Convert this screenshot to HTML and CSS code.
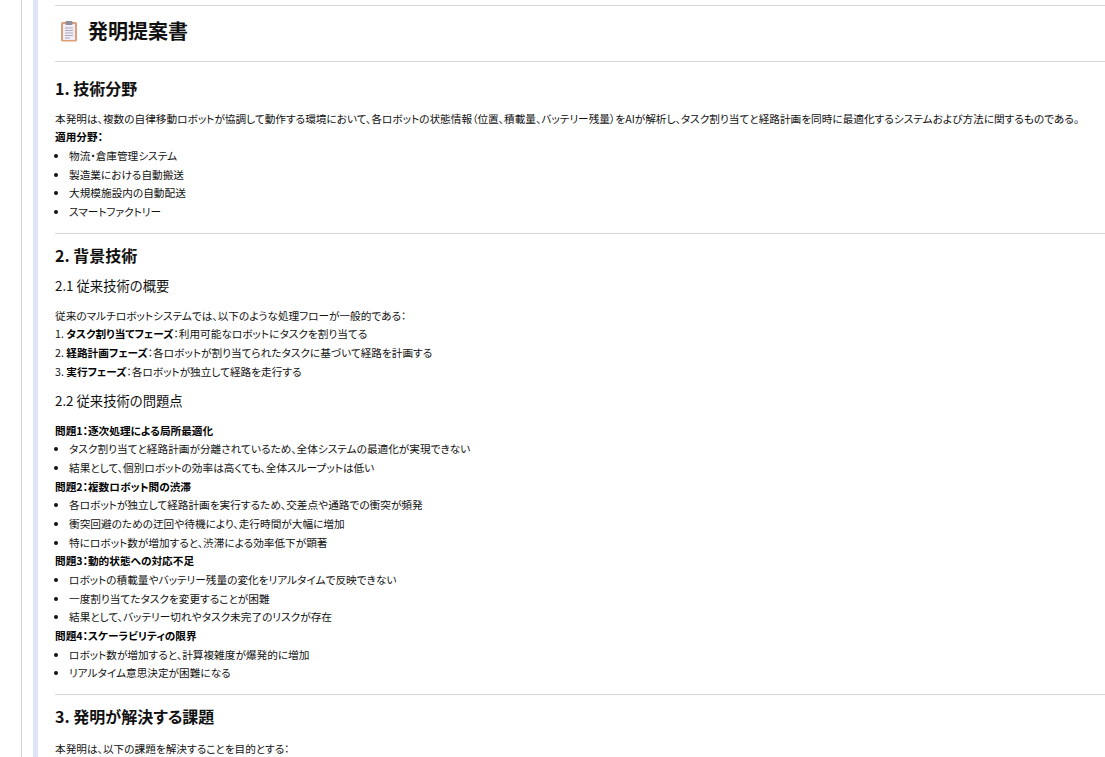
FILE: index.html
```html
<!DOCTYPE html>
<html lang="ja">
<head>
<meta charset="utf-8">
<title>発明提案書</title>
<link rel="stylesheet" href="styles.css">
</head>
<body>
<div class="rail">
<main class="doc">
<hr class="rule first">
<h1 class="title"><svg class="clip" viewBox="0 0 18 22" width="18" height="22" aria-hidden="true"><rect x="1" y="2" width="16" height="19.5" rx="1.5" fill="#dc9f78"/><rect x="3" y="4" width="12" height="16" fill="#f0edf6"/><rect x="5.5" y="1" width="7" height="4" rx="1" fill="#8d8f9c"/><path d="M5 8h8M5 10.5h8M5 13h8M5 15.500h8M5 18h5" stroke="#a9a9c0" stroke-width="1"/></svg><span>発明提案書</span></h1>
<hr class="rule">
<h2 class="h-one">1. 技術分野</h2>
<p>本発明は、複数の自律移動ロボットが協調して動作する環境において、各ロボットの状態情報（位置、積載量、バッテリー残量）をAIが解析し、タスク割り当てと経路計画を同時に最適化するシステムおよび方法に関するものである。<br><strong>適用分野：</strong></p>
<ul>
<li>物流・倉庫管理システム</li>
<li>製造業における自動搬送</li>
<li>大規模施設内の自動配送</li>
<li>スマートファクトリー</li>
</ul>
<hr class="rule">
<h2>2. 背景技術</h2>
<h3>2.1 従来技術の概要</h3>
<p>従来のマルチロボットシステムでは、以下のような処理フローが一般的である：<br>1. <strong>タスク割り当てフェーズ</strong>：利用可能なロボットにタスクを割り当てる<br>2. <strong>経路計画フェーズ</strong>：各ロボットが割り当てられたタスクに基づいて経路を計画する<br>3. <strong>実行フェーズ</strong>：各ロボットが独立して経路を走行する</p>
<h3>2.2 従来技術の問題点</h3>
<p><strong>問題1：逐次処理による局所最適化</strong></p>
<ul>
<li>タスク割り当てと経路計画が分離されているため、全体システムの最適化が実現できない</li>
<li>結果として、個別ロボットの効率は高くても、全体スループットは低い</li>
</ul>
<p><strong>問題2：複数ロボット間の渋滞</strong></p>
<ul>
<li>各ロボットが独立して経路計画を実行するため、交差点や通路での衝突が頻発</li>
<li>衝突回避のための迂回や待機により、走行時間が大幅に増加</li>
<li>特にロボット数が増加すると、渋滞による効率低下が顕著</li>
</ul>
<p><strong>問題3：動的状態への対応不足</strong></p>
<ul>
<li>ロボットの積載量やバッテリー残量の変化をリアルタイムで反映できない</li>
<li>一度割り当てたタスクを変更することが困難</li>
<li>結果として、バッテリー切れやタスク未完了のリスクが存在</li>
</ul>
<p><strong>問題4：スケーラビリティの限界</strong></p>
<ul>
<li>ロボット数が増加すると、計算複雑度が爆発的に増加</li>
<li>リアルタイム意思決定が困難になる</li>
</ul>
<hr class="rule">
<h2>3. 発明が解決する課題</h2>
<p>本発明は、以下の課題を解決することを目的とする：</p>
</main>
</div>
</body>
</html>
```
FILE: styles.css
```css
html, body {
  margin: 0;
  height: 757px;
  overflow: hidden;
  background: #fff;
}
body {
  padding-left: 21px;
  box-sizing: border-box;
  font-family: "Noto Sans CJK JP", "Noto Sans", sans-serif;
  color: #111;
  font-size: 10.67px;
  line-height: 18.67px;
  font-feature-settings: "palt";
}
.rail {
  border-left: 1px solid #d4d4d8;
  padding-left: 11px;
  height: 100%;
}
.doc {
  border-left: 5px solid #e0e4f8;
  padding-left: 17px;
  padding-top: 5px;
  height: 100%;
  overflow: hidden;
}
.rule {
  border: 0;
  border-top: 1px solid #d8d8dc;
  margin: 0;
}
.title {
  display: flex;
  align-items: center;
  gap: 10px;
  font-size: 20px;
  line-height: 50px;
  margin: 0 0 5px 5px;
  color: #111;
  font-weight: 700;
}
.clip { flex: none; }
h2 {
  font-size: 16px;
  line-height: 20px;
  font-weight: 700;
  color: #111;
  margin: 11px 0 10.67px;
}
h2 + h3 { margin-top: 12.5px; }
h2 + p { margin-top: 13.67px; }
.h-one { margin-top: 15.8px; margin-bottom: 11.9px; }
.h-one + p { margin-top: 11.9px; }
h3 {
  font-size: 13.33px;
  line-height: 18px;
  font-weight: 400;
  color: #111;
  margin: 0 0 11.67px;
}
p { margin: 0; }
p + h3 { margin-top: 10.7px; }
ul { margin: 0; padding-left: 14px; }
ul + .rule { margin-top: 10.8px; }
strong { font-weight: 700; color: #000; }
```
